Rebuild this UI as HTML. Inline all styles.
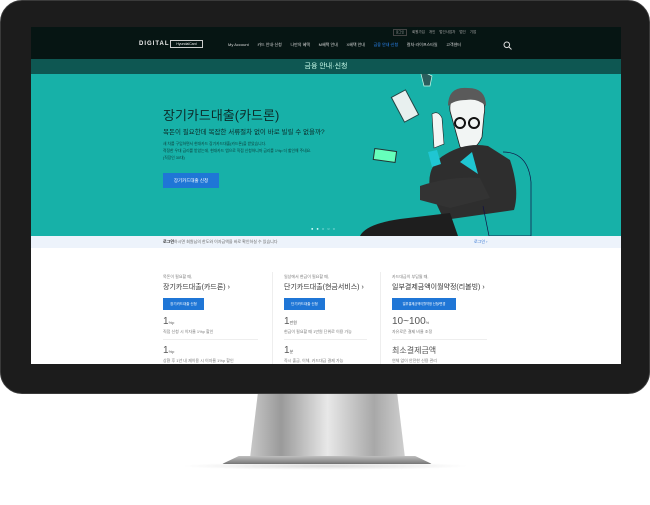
<!DOCTYPE html>
<html><head><meta charset="utf-8"><style>
*{margin:0;padding:0;box-sizing:border-box}
body{width:650px;height:505px;background:#fff;position:relative;overflow:hidden;font-family:"Liberation Sans","Noto Sans CJK KR",sans-serif}
.bezel{position:absolute;left:0;top:0;width:650px;height:394px;background:#1c1c1c;border-radius:22px;border:1px solid #3a3a3a}
.screen{position:absolute;left:31px;top:27px;width:590px;height:337px;background:#fff;overflow:hidden}
.nav{position:absolute;left:0;top:0;width:590px;height:32px;background:#061513}
.sub{position:absolute;left:0;top:32px;width:590px;height:15px;background:#0e5752;color:#cfe;font-size:7px;text-align:center;line-height:15px}
.hero{position:absolute;left:0;top:47px;width:590px;height:162px;background:#17b1a8}
.login{position:absolute;left:0;top:209px;width:590px;height:12px;background:#edf3fb;font-size:4px;color:#666;line-height:12px}
.t{position:absolute;white-space:nowrap}
.btn{position:absolute;background:#1f76d6;color:#fff;text-align:center;white-space:nowrap;overflow:hidden}
.h{font-size:4px;color:#777}
.menu{position:absolute;left:197px;top:15px;width:233px;display:flex;justify-content:space-between;font-size:4px;color:#ddd;white-space:nowrap}
</style></head><body>
<div class="bezel"></div>
<div class="screen">
 <div class="nav">
  <div class="t" style="left:362px;top:2px;width:14px;height:7px;border:1px solid #444;font-size:3px;color:#aaa;text-align:center">로그인</div>
  <div class="t" style="left:381px;top:3px;font-size:3.5px;color:#aaa;word-spacing:3px">회원가입 개인 법인사업자 법인 기업</div>
  <div class="t" style="left:108px;top:14px;font-size:6px;color:#eee;letter-spacing:1px;font-weight:bold">DIGITAL</div>
  <div class="t" style="left:139px;top:13px;width:33px;height:8px;border:1px solid #ccc;font-size:3.5px;color:#eee;text-align:center;line-height:6px">HyundaiCard</div>
  <div class="menu"><span>My Account</span><span>카드 안내·신청</span><span>나만의 혜택</span><span>M혜택 안내</span><span>X혜택 안내</span><span style="color:#2d8cff">금융 안내·신청</span><span>컬처·라이프스타일</span><span>고객센터</span></div>
  <svg class="t" style="left:472px;top:14px" width="9" height="9"><circle cx="3.8" cy="3.8" r="2.8" stroke="#ddd" fill="none" stroke-width="1"/><line x1="6" y1="6" x2="8.5" y2="8.5" stroke="#ddd" stroke-width="1"/></svg>
 </div>
 <div class="sub">금융 안내·신청</div>
 <div class="hero">
  <div class="t" style="left:132px;top:31px;font-size:13px;color:#0c2b29">장기카드대출(카드론)</div>
  <div class="t" style="left:132px;top:52px;font-size:6.5px;color:#0c2b29">목돈이 필요한데 복잡한 서류절차 없이 바로 빌릴 수 없을까?</div>
  <div class="t" style="left:132px;top:67px;font-size:3.8px;color:#0c3a37;line-height:7px">새 차를 구입하면서 현대카드 장기카드대출(카드론)을 받았습니다.<br>적정한 우대 금리를 받았는데, 현대카드 앱으로 직접 신청하니까 금리를 1%p 더 할인해 주네요.<br>(직장인 30대)</div>
  <div class="btn" style="left:132px;top:99px;width:56px;height:15px;font-size:4.5px;line-height:15px">장기카드대출 신청</div>
  <svg class="t" style="left:329px;top:0" width="200" height="162">
   <path d="M61 0 l3-2 l8 4 l-2 10 h-6z" fill="#2b5e5d" stroke="#cfe" stroke-width=".7"/>
   <rect x="37" y="18" width="16" height="28" fill="#e8f0ef" stroke="#244" transform="rotate(-28 45 32)"/>
   <rect x="14" y="76" width="22" height="11" fill="#6fb" stroke="#233" transform="rotate(8 25 81)"/>
   <path d="M90 37 q-2-18 18-18 q20 2 16 22 l-2 22 q-8 18 -22 10 z" fill="#f2f5f4" stroke="#222" stroke-width=".8"/>
   <path d="M88 32 q0-20 20-18 q18 0 18 18 q-8-8-20-6 q-12 0-18 6z" fill="#5a5a5a"/>
   <circle cx="100" cy="49" r="5" fill="none" stroke="#111" stroke-width="2"/><circle cx="114" cy="49" r="5" fill="none" stroke="#111" stroke-width="2"/>
   <path d="M86 80 q20-12 42-8 l22 14 q10 30 4 50 l-70 10 l-14-30 q-4-25 16-36z" fill="#2e2e2e"/>
   <path d="M100 88 l12-10 l6 22 z" fill="#1fc6d2"/>
   <path d="M68 78 l9-2 l4 14 l-9 3 z" fill="#1fc6d2"/>
   <path d="M72 40 q6-4 10 4 l2 26 l-10 4 z" fill="#f2f5f4" stroke="#222" stroke-width=".6"/>
   <path d="M60 112 q30-10 60 -8 l10 20 l-40 10 l-30 -8z" fill="#333"/>
   <path d="M0 162 q6-12 40-17 l50-6 l8 23 z" fill="#1e1e1e"/>
   <path d="M143 78 q25 0 28 30 l0 54 h-42 l-6-30" fill="none" stroke="#114" stroke-width=".7"/>
  </svg>
  <div class="t" style="left:280px;top:152px;font-size:4px;color:#dff;letter-spacing:3px">●●○○○</div>
 </div>
 <div class="login"><span class="t" style="left:132px"><b style="color:#222">로그인</b>하시면 회원님의 한도와 이자금액을 바로 확인하실 수 있습니다</span><span class="t" style="left:443px;color:#2a6fd0">로그인 ›</span></div>
 <div class="t" style="left:241px;top:245px;width:1px;height:92px;background:#eee"></div>
 <div class="t" style="left:349px;top:245px;width:1px;height:92px;background:#eee"></div>

  <div class="t h" style="left:132px;top:247px">목돈이 필요할 때,</div>
  <div class="t" style="left:132px;top:255px;font-size:7px;color:#333">장기카드대출(카드론) ›</div>
  <div class="btn" style="left:132px;top:271px;width:41px;height:12px;font-size:3.5px;line-height:12px">장기카드대출 신청</div>
  <div class="t" style="left:132px;top:289px;font-size:10px;color:#555">1<span style="font-size:4px">%p</span></div>
  <div class="t h" style="left:132px;top:302px">직접 신청 시 이자율 1%p 할인</div>
  <div class="t" style="left:132px;top:312px;width:95px;height:1px;background:#eee"></div>
  <div class="t" style="left:132px;top:318px;font-size:10px;color:#555">1<span style="font-size:4px">%p</span></div>
  <div class="t h" style="left:132px;top:331px">상환 후 1년 내 재이용 시 이자율 1%p 할인</div>

  <div class="t h" style="left:253px;top:247px">일상에서 현금이 필요할 때,</div>
  <div class="t" style="left:253px;top:255px;font-size:7px;color:#333">단기카드대출(현금서비스) ›</div>
  <div class="btn" style="left:253px;top:271px;width:41px;height:12px;font-size:3.5px;line-height:12px">단기카드대출 신청</div>
  <div class="t" style="left:253px;top:289px;font-size:10px;color:#555">1<span style="font-size:4px">만원</span></div>
  <div class="t h" style="left:253px;top:302px">현금이 필요할 때 1만원 단위로 이용 가능</div>
  <div class="t" style="left:253px;top:312px;width:83px;height:1px;background:#eee"></div>
  <div class="t" style="left:253px;top:318px;font-size:10px;color:#555">1<span style="font-size:4px">분</span></div>
  <div class="t h" style="left:253px;top:331px">즉시 출금, 이체, 카드대금 결제 가능</div>

  <div class="t h" style="left:361px;top:247px">카드대금이 부담될 때,</div>
  <div class="t" style="left:361px;top:255px;font-size:7px;color:#333">일부결제금액이월약정(리볼빙) ›</div>
  <div class="btn" style="left:361px;top:271px;width:64px;height:12px;font-size:3.2px;line-height:12px">일부결제금액이월약정 신청/변경</div>
  <div class="t" style="left:361px;top:289px;font-size:10px;color:#555">10~100<span style="font-size:4px">%</span></div>
  <div class="t h" style="left:361px;top:302px">자유로운 결제 비율 조정</div>
  <div class="t" style="left:361px;top:312px;width:95px;height:1px;background:#eee"></div>
  <div class="t" style="left:361px;top:318px;font-size:8px;color:#555">최소결제금액</div>
  <div class="t h" style="left:361px;top:331px">연체 없이 안전한 신용 관리</div>
</div>
<div style="position:absolute;left:250px;top:394px;width:155px;height:64px;background:linear-gradient(90deg,#c8c8c8,#9a9a9a 20%,#e8e8e8 50%,#a8a8a8 80%,#cfcfcf);clip-path:polygon(5% 0,95% 0,100% 100%,0 100%)"></div>
<div style="position:absolute;left:222px;top:456px;width:210px;height:8px;background:linear-gradient(#c0c0c0,#777);border-radius:4px 4px 2px 2px;clip-path:polygon(8% 0,92% 0,100% 100%,0 100%)"></div>
<div style="position:absolute;left:180px;top:462px;width:290px;height:8px;background:radial-gradient(ellipse,rgba(0,0,0,.15),transparent 70%)"></div>
</body></html>
